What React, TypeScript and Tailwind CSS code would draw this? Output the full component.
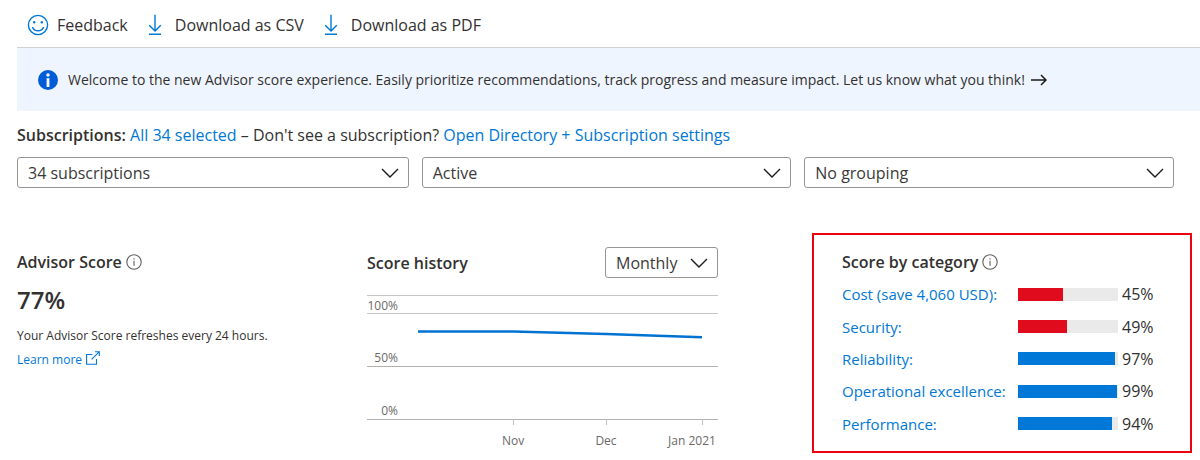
import React, { useState } from "react";

type Category = { name: string; score: number; low?: boolean };

const categories: Category[] = [
  { name: "Cost (save 4,060 USD):", score: 45, low: true },
  { name: "Security:", score: 49, low: true },
  { name: "Reliability:", score: 97 },
  { name: "Operational excellence:", score: 99 },
  { name: "Performance:", score: 94 },
];

function SmileIcon() {
  return (
    <svg className="size-[22px]" viewBox="0 0 22 22" fill="none" stroke="#0078d4" strokeWidth="1.4" aria-hidden="true">
      <circle cx="11" cy="11" r="9.6" />
      <path d="M5.4 12.9a6 6 0 0 0 11.2 0" />
      <circle cx="7.2" cy="8.3" r="1.2" fill="#0078d4" stroke="none" />
      <circle cx="14.8" cy="8.3" r="1.2" fill="#0078d4" stroke="none" />
    </svg>
  );
}

function DownloadIcon() {
  return (
    <svg className="h-[22px] w-[14px]" viewBox="0 0 14 22" fill="none" stroke="#0078d4" strokeWidth="1.4" aria-hidden="true">
      <path d="M7 .8V17M1.2 11.2 7 17l5.8-5.8M1 20.3h12" />
    </svg>
  );
}

function InfoOutlineIcon() {
  return (
    <svg className="size-4" viewBox="0 0 16 16" fill="none" stroke="#605e5c" aria-hidden="true">
      <circle cx="8" cy="8" r="7.2" strokeWidth="1.1" />
      <path d="M8 6.8v5M8 4.2v1.3" strokeWidth="1.1" />
    </svg>
  );
}

function InfoSolidIcon() {
  return (
    <svg className="size-5 shrink-0" viewBox="0 0 20 20" aria-hidden="true">
      <circle cx="10" cy="10" r="10" fill="#015cda" />
      <circle cx="10" cy="5" r="1.7" fill="#fff" />
      <path d="M8.6 8.2h2.8V17H8.6z" fill="#fff" />
    </svg>
  );
}

function ArrowIcon() {
  return (
    <svg className="h-3 w-4 shrink-0" viewBox="0 0 16 12" fill="none" stroke="#1b1a19" strokeWidth="1.5" aria-hidden="true">
      <path d="M0 6h15M10 1l5 5-5 5" />
    </svg>
  );
}

function ExternalIcon() {
  return (
    <svg className="mb-1 size-[14px]" viewBox="0 0 14 14" fill="none" stroke="#0078d4" strokeWidth="1.1" aria-hidden="true">
      <path d="M6.4 3.5H.6v9.7h9.9V8M5.6 8.4 13.1.9M9 .8h4.3v4.3" />
    </svg>
  );
}

function Dropdown({ label, options }: { label: string; options: string[] }) {
  const [value, setValue] = useState(options[0]);
  return (
    <div className="relative">
      <select
        aria-label={label}
        value={value}
        onChange={(e) => setValue(e.target.value)}
        className="block h-[31px] w-full appearance-none rounded-[3px] border border-[#979593] bg-white pr-9 pl-[10px] text-base leading-6 text-[#3b3a39]"
      >
        {options.map((o) => (
          <option key={o}>{o}</option>
        ))}
      </select>
      <svg
        className="pointer-events-none absolute top-[11px] right-[10px] h-[10px] w-[18px]"
        viewBox="0 0 18 10"
        fill="none"
        stroke="#1b1a19"
        strokeWidth="1.4"
        aria-hidden="true"
      >
        <path d="M1 1l8 8 8-8" />
      </svg>
    </div>
  );
}

function HistoryChart() {
  return (
    <svg className="mt-4 block w-full text-[12px]" viewBox="0 0 351 160" role="img" aria-label="Score history by month">
      <g stroke="#c8c6c4" strokeWidth="1">
        <path d="M0 1.5h351M0 19.5h351" />
        <path d="M0 72.5h351M0 125.5h351" stroke="#b3b0ad" />
        <path d="M146.5 125v6M239.5 125v6M335.5 125v6" />
      </g>
      <path d="M51 37.5h95L239 40l96 3.2" fill="none" stroke="#0072d2" strokeWidth="2.6" />
      <g fill="#6b6967">
        <g textAnchor="end">
          <text x="31" y="16">100%</text>
          <text x="31" y="68">50%</text>
          <text x="31" y="121">0%</text>
        </g>
        <g textAnchor="middle">
          <text x="146" y="151">Nov</text>
          <text x="239" y="151">Dec</text>
          <text x="325" y="151">Jan 2021</text>
        </g>
      </g>
    </svg>
  );
}

export default function App() {
  return (
    <main className="bg-white pl-[17px] font-['Open_Sans','Noto_Sans',sans-serif] text-base leading-6 text-[#323130]">
      <div className="flex h-12 items-center gap-5 border-b border-[#d2d0ce] pt-[2px] pl-[10px]">
        <button type="button" className="flex items-center gap-2">
          <SmileIcon />
          Feedback
        </button>
        <button type="button" className="flex items-center gap-[13px]">
          <DownloadIcon />
          Download as CSV
        </button>
        <button type="button" className="flex items-center gap-[13px]">
          <DownloadIcon />
          Download as PDF
        </button>
      </div>

      <a href="#feedback" className="flex h-[63px] items-center gap-[10px] bg-[#eff5ff] pl-[21px] text-sm text-[#323130]">
        <InfoSolidIcon />
        <span className="flex items-center gap-[6px]">
          Welcome to the new Advisor score experience. Easily prioritize recommendations, track progress and measure
          impact. Let us know what you think!
          <ArrowIcon />
        </span>
      </a>

      <p className="pt-3">
        <b className="font-semibold">Subscriptions:</b>{" "}
        <a href="#subscriptions" className="text-[#0078d4]">All 34 selected</a> – Don't see a subscription?{" "}
        <a href="#settings" className="text-[#0078d4]">Open Directory + Subscription settings</a>
      </p>

      <div className="mt-[10px] grid grid-cols-[392fr_370fr_370fr] gap-[13px] pr-[26px]">
        <Dropdown label="Subscriptions" options={["34 subscriptions"]} />
        <Dropdown label="Status" options={["Active", "Postponed", "Dismissed"]} />
        <Dropdown label="Grouping" options={["No grouping", "Group by subscription"]} />
      </div>

      <div className="mt-[45px] grid grid-cols-[350fr_445fr_380fr] items-start pr-2">
        <section className="pt-[17px]">
          <h2 className="flex items-center gap-1 font-semibold">
            Advisor Score
            <InfoOutlineIcon />
          </h2>
          <p className="mt-[10px] text-2xl leading-8 font-semibold">77%</p>
          <p className="mt-2 text-xs leading-6">Your Advisor Score refreshes every 24 hours.</p>
          <a href="#learn" className="flex items-center gap-1 text-xs leading-6 text-[#0078d4]">
            Learn more
            <ExternalIcon />
          </a>
        </section>

        <section className="pt-[14px] pr-[94px]">
          <div className="flex items-center justify-between">
            <h2 className="font-semibold">Score history</h2>
            <div className="w-[113px]">
              <Dropdown label="Period" options={["Monthly", "Weekly", "Daily"]} />
            </div>
          </div>
          <HistoryChart />
        </section>

        <section className="border-2 border-[#ee0010] pt-[15px] pr-9 pb-[11px] pl-7">
          <h2 className="flex items-center gap-1 font-semibold">
            Score by category
            <InfoOutlineIcon />
          </h2>
          <ul className="mt-1 grid h-[162px] grid-rows-5">
            {categories.map((c) => (
              <li key={c.name} className="flex items-center">
                <a href="#category" className="min-w-0 flex-1 text-[15px] whitespace-nowrap text-[#0078d4]">{c.name}</a>
                <span className="flex h-[13px] w-[100px] bg-[#eaeaea]">
                  <span className={c.low ? "bg-[#e00b1c]" : "bg-[#0078d7]"} style={{ width: `${c.score}%` }} />
                </span>
                <span className="w-9 pl-1">{c.score}%</span>
              </li>
            ))}
          </ul>
        </section>
      </div>
    </main>
  );
}
